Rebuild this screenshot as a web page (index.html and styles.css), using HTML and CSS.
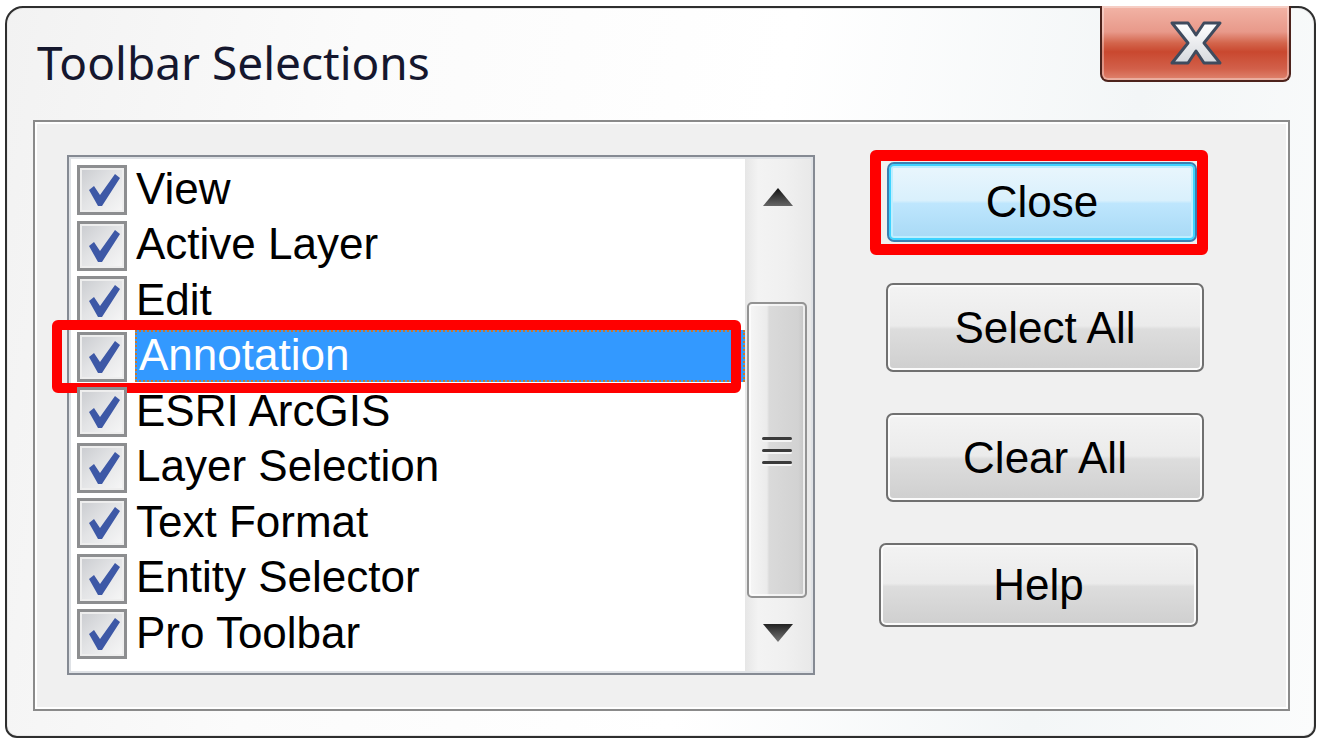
FILE: index.html
```html
<!DOCTYPE html>
<html lang="en">
<head>
    <meta charset="UTF-8">
    <title>Toolbar Selections</title>
    <link rel="stylesheet" href="styles.css">
</head>
<body>
    <div class="window">
        <div class="titlebar">
            <h1 class="title">Toolbar Selections</h1>
            <button class="close-x" title="Close">
                <svg width="54" height="46" viewBox="0 0 54 46">
                    <defs>
                        <linearGradient id="xfill" x1="0" y1="0" x2="0" y2="1">
                            <stop offset="0" stop-color="#ffffff"/>
                            <stop offset="1" stop-color="#d6d9de"/>
                        </linearGradient>
                    </defs>
                    <polygon points="3,3 19,3 27,15 35,3 51,3 35,23 51,43 35,43 27,31 19,43 3,43 19,23" fill="url(#xfill)" stroke="#3f4b5e" stroke-width="3" stroke-linejoin="round"/>
                </svg>
            </button>
        </div>

        <div class="panel">
            <div class="listbox">
                <ul class="items" id="items"></ul>
                <div class="scrollbar">
                    <div class="sb-btn">
                        <svg width="30" height="18" viewBox="0 0 30 18"><polygon points="15,0 30,18 0,18" fill="url(#arrowUp)"/>
                            <defs><linearGradient id="arrowUp" x1="0" y1="0" x2="0" y2="1"><stop offset="0" stop-color="#111"/><stop offset="1" stop-color="#666"/></linearGradient></defs>
                        </svg>
                    </div>
                    <div class="sb-track"></div>
                    <div class="sb-thumb">
                        <span class="grip"></span>
                        <span class="grip"></span>
                        <span class="grip"></span>
                    </div>
                    <div class="sb-btn">
                        <svg width="30" height="18" viewBox="0 0 30 18"><polygon points="0,0 30,0 15,18" fill="url(#arrowDown)"/>
                            <defs><linearGradient id="arrowDown" x1="0" y1="0" x2="0" y2="1"><stop offset="0" stop-color="#222"/><stop offset="1" stop-color="#777"/></linearGradient></defs>
                        </svg>
                    </div>
                </div>
            </div>

            <div class="actions">
                <div class="marked marked-close">
                    <button class="btn btn-default btn-close">Close</button>
                </div>
                <button class="btn btn-select">Select All</button>
                <button class="btn btn-clear">Clear All</button>
                <button class="btn btn-help">Help</button>
            </div>
        </div>
    </div>

    <script>
        const toolbars = ['View', 'Active Layer', 'Edit', 'Annotation', 'ESRI ArcGIS',
            'Layer Selection', 'Text Format', 'Entity Selector', 'Pro Toolbar'];
        const selected = 'Annotation';

        // blue tick drawn inside the 44px box
        const check = '<svg width="44" height="44" viewBox="0 0 44 44">' +
            '<polygon points="9,22 14,18 20,27 35,6 40,10 22,38 18,38" fill="#3d58a6"/></svg>';

        const list = document.getElementById('items');
        toolbars.forEach(name => {
            let li = document.createElement('li');
            li.classList.add('item');
            if (name === selected) li.classList.add('selected');
            li.innerHTML = '<span class="check">' + check + '</span><span class="label">' + name + '</span>';
            list.appendChild(li);
        });
    </script>
</body>
</html>
```

FILE: styles.css
```css
* {
    box-sizing: border-box;
}
body {
    margin: 0;
    background: #ffffff;
    font-family: "Liberation Sans", Arial, sans-serif;
}
.window {
    margin: 6px 0 0 5px;
    width: 1311px;
    height: 732px;
    border: 2px solid #2e2e2e;
    border-radius: 18px 18px 12px 12px;
    background: linear-gradient(100deg, #f2f2f2 0%, #fbfbfb 25%, #ffffff 55%, #f3f6f7 80%, #fbfcfc 100%);
    box-shadow: inset 0 0 0 1px #e8e8e8;
    display: flex;
    flex-direction: column;
}
.titlebar {
    height: 112px;
    display: flex;
    justify-content: space-between;
    align-items: flex-start;
}
.title {
    margin: 31px 0 0 30px;
    font-family: "Noto Sans", "Open Sans", sans-serif;
    font-weight: normal;
    font-size: 46px;
    line-height: 46px;
    color: #15172e;
}
.close-x {
    width: 191px;
    height: 76px;
    margin: -2px 23px 0 0;
    padding: 0;
    border: 2px solid #4d231c;
    border-top: none;
    border-radius: 0 0 8px 8px;
    background: linear-gradient(to bottom, #f2b4a6 0%, #e8998a 35%, #d3654c 50%, #c9482f 62%, #d2604a 85%, #e08570 100%);
    box-shadow: inset 0 0 0 2px rgba(255, 255, 255, 0.35);
    display: flex;
    align-items: center;
    justify-content: center;
    cursor: pointer;
}
.panel {
    margin: 0 24px 25px 26px;
    flex: 1;
    background: #f0f0f0;
    border: 2px solid #8a8a8a;
    box-shadow: inset 0 0 0 2px #ffffff;
    padding: 33px 0 0 32px;
    display: flex;
    align-items: flex-start;
}
.listbox {
    width: 748px;
    height: 520px;
    background: #ffffff;
    border: 2px solid #858a93;
    padding: 2px;
    box-shadow: inset 0 0 0 2px #dfe2e6;
    display: flex;
}
.items {
    list-style: none;
    margin: 0;
    padding: 1px 0 0 0;
    flex: 1;
}
.item {
    height: 55.5px;
    display: flex;
    align-items: flex-end;
    position: relative;
}
.check {
    width: 50px;
    height: 50px;
    margin: 0 0 0.5px 6px;
    border: 3px solid #8d8e90;
    background: linear-gradient(135deg, #c9cbcf 0%, #e2e3e5 45%, #f7f7f7 100%);
    box-shadow: inset 0 0 0 2px #eeeeee;
    display: flex;
    align-items: center;
    justify-content: center;
}
.label {
    flex: 1;
    height: 52px;
    margin-left: 8px;
    padding-left: 1px;
    font-size: 44px;
    line-height: 50px;
    color: #000000;
    white-space: nowrap;
}
.selected .label {
    background: #3399ff;
    color: #ffffff;
    outline: 2px dotted #c9782c;
    outline-offset: -2px;
    padding-left: 4px;
}
.selected::after {
    content: "";
    position: absolute;
    left: -19px;
    top: -6.5px;
    right: 4px;
    bottom: -11px;
    border: 10px solid #ff0000;
    border-radius: 6px;
}
.scrollbar {
    width: 66px;
    padding: 3px 0;
    background: linear-gradient(to right, #e6e6e6 0%, #f3f3f3 20%, #f0f0f0 60%, #e9e9e9 100%);
}
.sb-btn {
    height: 70px;
    display: flex;
    align-items: center;
    justify-content: center;
}
.sb-track {
    height: 70px;
}
.sb-thumb {
    height: 296px;
    margin: 0 4px 0 2px;
    border: 2px solid #939393;
    border-radius: 5px;
    background: linear-gradient(to right, #f6f6f6 0%, #ebebeb 32%, #dadada 36%, #d2d2d2 88%, #c4c4c4 100%);
    box-shadow: inset 0 0 0 2px rgba(255, 255, 255, 0.7);
    display: flex;
    flex-direction: column;
    justify-content: center;
    align-items: center;
    gap: 9px;
}
.grip {
    width: 30px;
    height: 3px;
    background: #3a3a3a;
    border-radius: 2px;
    box-shadow: 0 2px 0 #f4f4f4;
}
.actions {
    margin-left: 64px;
    display: flex;
    flex-direction: column;
    align-items: flex-start;
}
.btn {
    font-family: "Liberation Sans", Arial, sans-serif;
    font-size: 44px;
    color: #000000;
    border: 2px solid #707070;
    border-radius: 7px;
    background: linear-gradient(to bottom, #f3f3f3 0%, #ebebeb 48%, #dddddd 52%, #cfcfcf 100%);
    box-shadow: inset 0 0 0 2px #fbfbfb;
    padding: 0;
    cursor: pointer;
}
.btn-default {
    border-color: #3c7fb1;
    background: linear-gradient(to bottom, #eaf6fd 0%, #d9f0fc 48%, #bee6fd 52%, #a7d9f5 100%);
    box-shadow: inset 0 0 0 2px #3ed3ff, inset 0 0 0 4px #bdeeff;
}
.marked {
    position: relative;
    margin: 7px 0 0 8px;
}
.marked::after {
    content: "";
    position: absolute;
    left: -17px;
    top: -12px;
    right: -11px;
    bottom: -13px;
    border: 11px solid #ff0000;
    border-radius: 6px;
}
.btn-close {
    display: block;
    width: 310px;
    height: 80px;
}
.btn-select {
    width: 318px;
    height: 89px;
    margin: 41px 0 0 7px;
}
.btn-clear {
    width: 318px;
    height: 89px;
    margin: 41px 0 0 7px;
}
.btn-help {
    width: 319px;
    height: 84px;
    margin-top: 41px;
}
```
